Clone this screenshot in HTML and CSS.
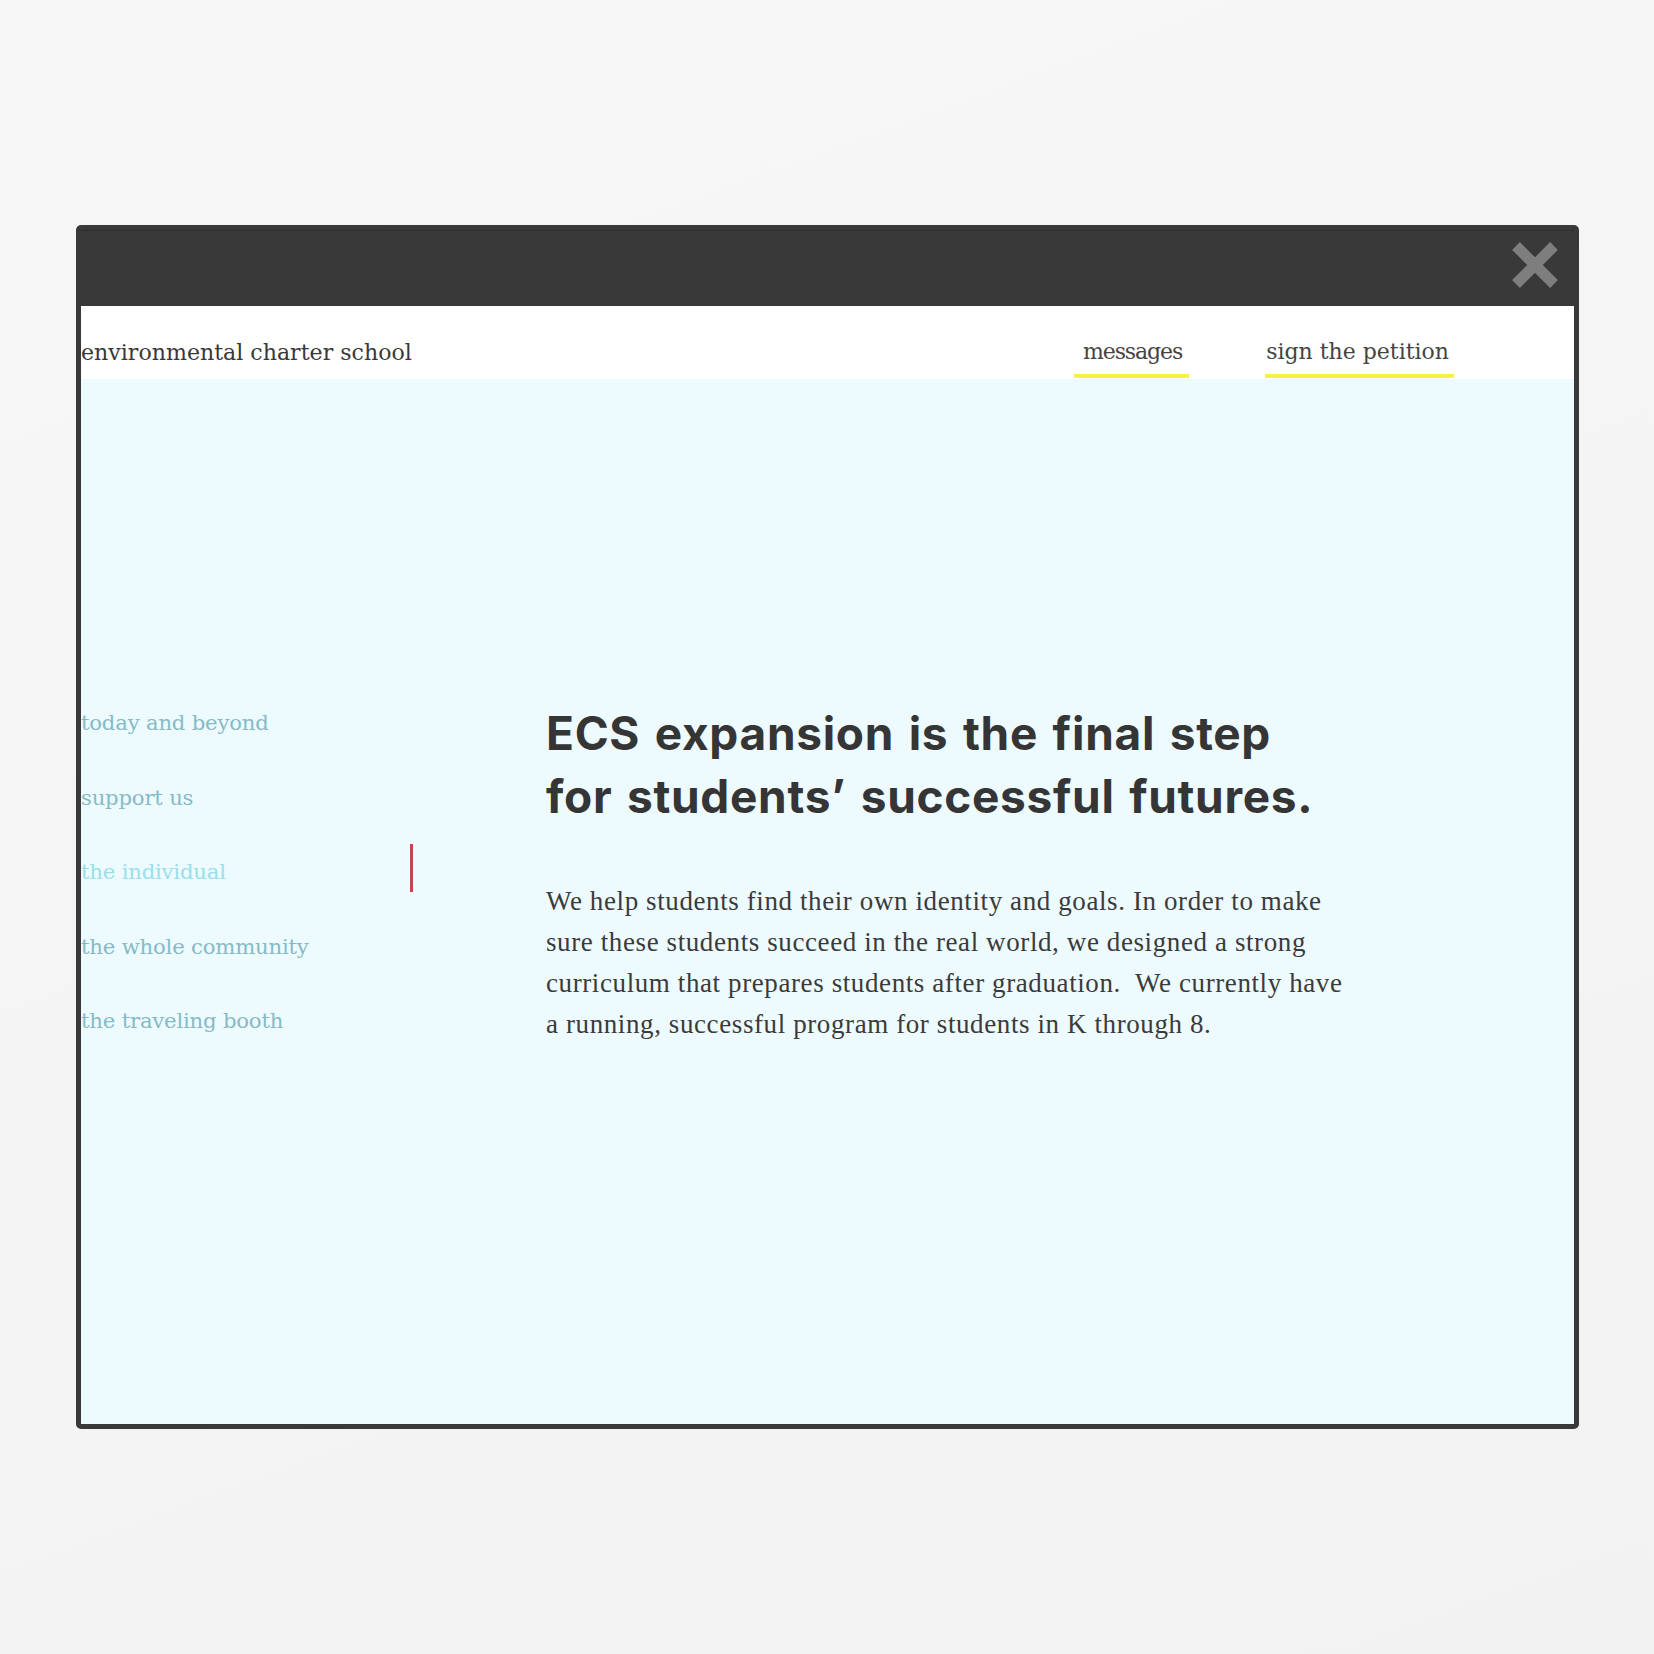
FILE: index.html
```html
<!DOCTYPE html>
<html lang="en">
<head>
<meta charset="utf-8">
<title>environmental charter school</title>
<link rel="stylesheet" href="styles.css">
</head>
<body>
<div class="frame">
  <div class="titlebar">
    <svg class="close" width="46" height="46" viewBox="0 0 46 46" aria-label="close">
      <path d="M4 4 L42 42 M42 4 L4 42" stroke="#7e7e7e" stroke-width="11" fill="none"/>
    </svg>
  </div>
  <header class="topnav">
    <div class="logo">environmental charter school</div>
    <nav class="links">
      <a class="link link-messages">messages</a>
      <a class="link link-petition">sign the petition</a>
    </nav>
  </header>
  <main class="content">
    <ul class="sidenav">
      <li class="side-item">today and beyond</li>
      <li class="side-item">support us</li>
      <li class="side-item active">the individual</li>
      <li class="side-item">the whole community</li>
      <li class="side-item">the traveling booth</li>
    </ul>
    <section class="article">
      <h1 class="headline">ECS expansion is the final step<br>for students’ successful futures.</h1>
      <p class="body-text">We help students find their own identity and goals. In order to make<br>sure these students succeed in the real world, we designed a strong<br>curriculum that prepares students after graduation.&nbsp; We currently have<br>a running, successful program for students in K through 8.</p>
    </section>
  </main>
</div>
</body>
</html>
```

FILE: styles.css
```css
html, body {
  margin: 0;
  padding: 0;
}
body {
  width: 1654px;
  height: 1654px;
  background: linear-gradient(160deg, #f7f7f7 0%, #f4f4f4 60%, #f2f2f2 100%);
  padding: 225px 0 0 76px;
  box-sizing: border-box;
}
.frame {
  width: 1503px;
  height: 1204px;
  box-sizing: border-box;
  border: 5px solid #393939;
  border-radius: 5px;
  display: flex;
  flex-direction: column;
  overflow: hidden;
}
.titlebar {
  height: 76px;
  flex: none;
  background: #393939;
  display: flex;
  justify-content: flex-end;
  align-items: flex-start;
  padding-right: 16px;
  border-top: 1px dotted #222;
  box-sizing: border-box;
}
.close {
  margin-top: 11px;
  display: block;
}
.topnav {
  height: 73px;
  flex: none;
  background: #ffffff;
  display: flex;
  align-items: flex-end;
  justify-content: space-between;
  font-family: "DejaVu Serif", "Liberation Serif", serif;
  font-size: 22px;
  color: #3d3d3d;
}
.logo {
  font-size: 22.1px;
  line-height: 28px;
  margin-bottom: 13px;
  letter-spacing: 0;
  color: #383838;
}
.links {
  display: flex;
  gap: 76px;
  margin-right: 120px;
  margin-bottom: 1px;
}
.link {
  display: block;
  line-height: 28px;
  padding-top: 1px;
  padding-bottom: 8px;
  border-bottom: 4px solid #f4f245;
  color: #444;
}
.link-messages {
  padding-left: 9px;
  padding-right: 7px;
  letter-spacing: -1.1px;
}
.link-petition {
  padding-left: 1px;
  padding-right: 5px;
  letter-spacing: 0;
}
.content {
  flex: 1;
  background: #edfafe;
  display: flex;
  padding-top: 316px;
}
.sidenav {
  list-style: none;
  margin: 0;
  padding: 0;
  width: 332px;
  margin-right: 133px;
  display: flex;
  flex-direction: column;
  gap: 26.5px;
  font-family: "DejaVu Serif", "Liberation Serif", serif;
  font-size: 21.2px;
  color: #86bac7;
  letter-spacing: -0.2px;
}
.side-item {
  height: 48px;
  line-height: 48px;
  padding-top: 4px;
  box-sizing: border-box;
  white-space: nowrap;
}
.side-item.active {
  color: #98e0ea;
  border-right: 3px solid #c2474f;
}
.article {
  padding-top: 7px;
}
.headline {
  margin: 0;
  font-family: "Inter", "Lato", sans-serif;
  font-weight: 700;
  font-size: 46px;
  line-height: 63px;
  color: #353535;
  letter-spacing: 0.7px;
  word-spacing: 3px;
}
.body-text {
  margin: 53px 0 0 0;
  font-family: "Liberation Serif", serif;
  font-size: 27px;
  line-height: 41px;
  color: #3b3b3b;
  letter-spacing: 0.6px;
}
```
